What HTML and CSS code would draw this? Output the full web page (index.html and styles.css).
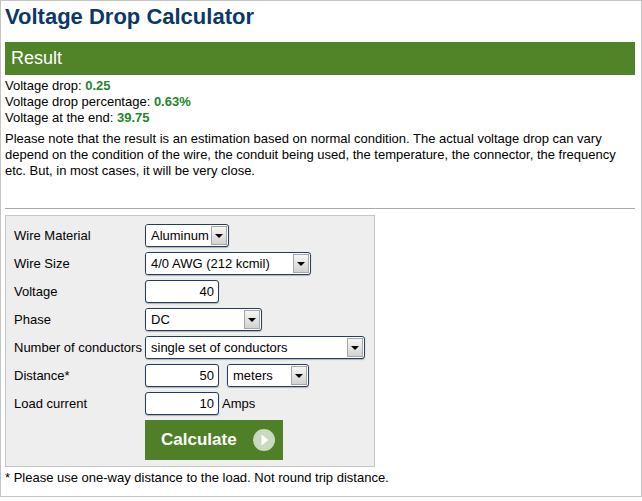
FILE: index.html
```html
<!DOCTYPE html>
<html lang="en">
<head>
    <meta charset="UTF-8">
    <title>Voltage Drop Calculator</title>
    <link rel="stylesheet" href="styles.css">
</head>
<body>
    <div class="page">
        <h1>Voltage Drop Calculator</h1>
        <h2 class="result-bar">Result</h2>
        <div class="result">
            <div>Voltage drop: <b>0.25</b></div>
            <div>Voltage drop percentage: <b>0.63%</b></div>
            <div>Voltage at the end: <b>39.75</b></div>
        </div>
        <p class="note">Please note that the result is an estimation based on normal condition. The actual voltage drop can vary depend on the condition of the wire, the conduit being used, the temperature, the connector, the frequency etc. But, in most cases, it will be very close.</p>
        <hr>
        <form class="calc">
            <label>Wire Material</label>
            <div class="field">
                <span class="select w84"><select><option>Aluminum</option></select><span class="arrow"></span></span>
            </div>
            <label>Wire Size</label>
            <div class="field">
                <span class="select w166"><select><option>4/0 AWG (212 kcmil)</option></select><span class="arrow"></span></span>
            </div>
            <label>Voltage</label>
            <div class="field"><input type="text" value="40"></div>
            <label>Phase</label>
            <div class="field">
                <span class="select w117"><select><option>DC</option></select><span class="arrow"></span></span>
            </div>
            <label>Number of conductors</label>
            <div class="field">
                <span class="select w220"><select><option>single set of conductors</option></select><span class="arrow"></span></span>
            </div>
            <label>Distance*</label>
            <div class="field">
                <input type="text" value="50">
                <span class="select w82"><select><option>meters</option></select><span class="arrow"></span></span>
            </div>
            <label>Load current</label>
            <div class="field"><input type="text" value="10"> <span class="unit">Amps</span></div>
            <span></span>
            <div class="field btn-cell">
                <button type="button" class="calc-btn">Calculate <span class="play"><svg width="22" height="22" viewBox="0 0 22 22"><circle cx="11" cy="11" r="11" fill="#c9d9bd"/><path d="M8.5 5.5 L15.5 11 L8.5 16.5 Z" fill="#ffffff"/></svg></span></button>
            </div>
        </form>
        <p class="footnote">* Please use one-way distance to the load. Not round trip distance.</p>
    </div>
</body>
</html>
```

FILE: styles.css
```css
body {
    margin: 0;
    font-family: "Liberation Sans", Arial, sans-serif;
    font-size: 13px;
    color: #000;
    background: #fff;
}
.page {
    width: 642px;
    height: 497px;
    box-sizing: border-box;
    border: 1px solid #c4c4c4;
    padding: 2px 6px 0 4px;
}
h1 {
    margin: 0 0 11px 0;
    font-size: 22px;
    line-height: 28px;
    color: #0c3866;
}
.result-bar {
    margin: 0;
    height: 33px;
    line-height: 33px;
    padding-left: 6px;
    background: #518329;
    color: #fff;
    font-size: 18px;
    font-weight: normal;
}
.result {
    margin-top: 3px;
    line-height: 16px;
}
.result b {
    color: #23862a;
}
.note {
    margin: 5px 0 0 0;
    line-height: 16px;
}
hr {
    margin: 29px 0 0 0;
    border: none;
    border-top: 1px solid #a9a9a9;
    height: 0;
}
.calc {
    margin-top: 6px;
    width: 370px;
    box-sizing: border-box;
    background: #eeeeee;
    border: 1px solid #c6c6c6;
    padding: 8px 0 6px 8px;
    display: grid;
    grid-template-columns: 131px 1fr;
    grid-template-rows: repeat(7, 23px) 40px;
    row-gap: 5px;
}
.calc label {
    line-height: 23px;
}
.field {
    display: flex;
    align-items: center;
    gap: 8px;
}
.select {
    display: inline-flex;
    height: 23px;
    box-sizing: border-box;
    border: 1px solid #243d5e;
    border-radius: 3px;
    background: #fff;
    box-shadow: 0 1px 1px rgba(0, 0, 0, 0.25);
    overflow: hidden;
}
.select select {
    appearance: none;
    -webkit-appearance: none;
    border: none;
    outline: none;
    background: #fff;
    font-family: "Liberation Sans", Arial, sans-serif;
    font-size: 13px;
    color: #000;
    padding: 0 0 0 5px;
    flex: 1;
    min-width: 0;
}
.select .arrow {
    width: 14px;
    margin: 1px 1px 1px 0;
    border: 1px solid #a6a6a6;
    background: linear-gradient(#f6f6f6, #d2d2d2);
    display: flex;
    align-items: center;
    justify-content: center;
}
.select .arrow::after {
    content: "";
    border-left: 4px solid transparent;
    border-right: 4px solid transparent;
    border-top: 4px solid #000;
}
.w84 { width: 84px; }
.w166 { width: 166px; }
.w117 { width: 117px; }
.w220 { width: 220px; }
.w82 { width: 82px; }
.field input[type="text"] {
    width: 74px;
    height: 23px;
    box-sizing: border-box;
    border: 1px solid #243d5e;
    border-radius: 3px;
    box-shadow: 0 1px 1px rgba(0, 0, 0, 0.25);
    text-align: right;
    padding: 0 4px;
    font-family: "Liberation Sans", Arial, sans-serif;
    font-size: 13px;
    color: #000;
    outline: none;
}
.field .unit {
    margin-left: -5px;
}
.btn-cell {
    align-self: start;
}
.calc-btn {
    width: 138px;
    height: 40px;
    border: none;
    background: #4f7f27;
    color: #fff;
    font-family: "Liberation Sans", Arial, sans-serif;
    font-size: 17px;
    font-weight: bold;
    display: flex;
    align-items: center;
    padding: 0 0 0 16px;
    gap: 16px;
    cursor: pointer;
}
.play {
    display: flex;
}
.footnote {
    margin: 3px 0 0 0;
    line-height: 16px;
}
```
